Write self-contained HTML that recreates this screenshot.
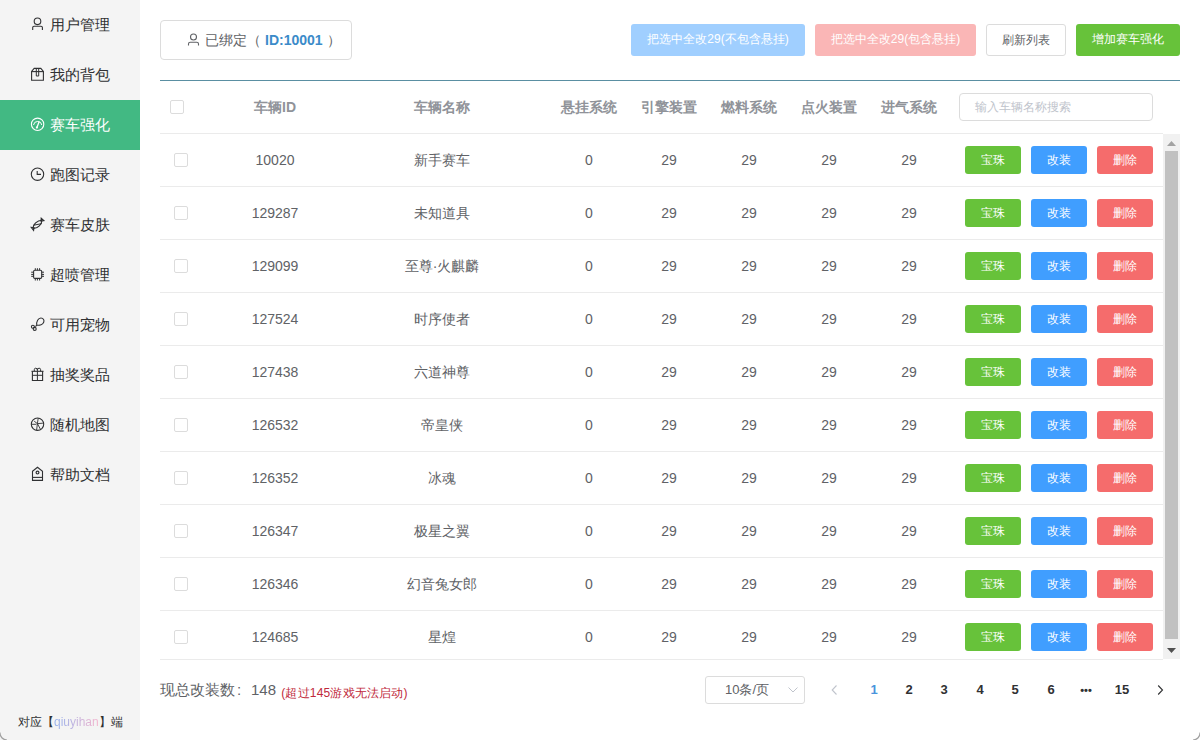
<!DOCTYPE html>
<html><head><meta charset="utf-8">
<style>
*{box-sizing:border-box;margin:0;padding:0}
html,body{width:1200px;height:740px;overflow:hidden;background:#fff;font-family:"Liberation Sans",sans-serif;}
.abs{position:absolute}
#side{position:absolute;left:0;top:0;width:140px;height:740px;background:#f4f4f4}
.mi{position:absolute;left:0;width:140px;height:50px;color:#303133;font-size:15px}
.mi.act{background:#42b983;color:#fff}
.ic{position:absolute;left:26px}
.mi .tx{position:absolute;left:50px;top:0;line-height:50px;white-space:nowrap}
#foot{position:absolute;left:18px;top:712px;font-size:12px;color:#303133;white-space:nowrap;line-height:20px}
#foot .g{background:linear-gradient(90deg,#93b2ee,#f5b3cc);-webkit-background-clip:text;background-clip:text;color:transparent}
.btn{position:absolute;top:24px;height:32px;border-radius:3px;font-size:12px;color:#fff;text-align:center;line-height:31px;white-space:nowrap}
#bind{position:absolute;left:160px;top:20px;width:192px;height:40px;border:1px solid #dcdcdc;border-radius:4px;font-size:14px;color:#606266}
#teal{position:absolute;left:160px;top:80px;width:1020px;height:1px;background:#5a8fa2}
.th{position:absolute;top:97px;font-size:14px;font-weight:bold;color:#909399;white-space:nowrap;line-height:20px;text-align:center}
.cb{position:absolute;width:14px;height:14px;border:1px solid #dcdcdc;border-radius:2px;background:#fff}
#body{position:absolute;left:160px;top:133px;width:1003px;height:527px;overflow:hidden;border-top:1px solid #ebebeb;border-bottom:1px solid #ebebeb}
.row{position:absolute;left:0;width:1003px;height:53px;border-bottom:1px solid #ebebeb}
.row .cb{top:19px}
.td{position:absolute;top:0;line-height:52px;font-size:14px;color:#606266;text-align:center;white-space:nowrap}
.sb{position:absolute;top:12px;width:56px;height:28px;border-radius:3px;font-size:12px;color:#fff;text-align:center;line-height:28px}
#scroll{position:absolute;left:1163px;top:134px;width:17px;height:525px;background:#f1f1f1}
#thumb{position:absolute;left:2px;top:17px;width:13px;height:488px;background:#c1c1c1}
.pg{position:absolute;top:680px;font-size:13px;font-weight:bold;color:#303133;line-height:20px;text-align:center}
</style></head><body>
<div id="side">
<div class="mi" style="top:0px"><svg class="ic" style="top:12px" width="24" height="24" viewBox="0 0 24 24" fill="none" stroke="#303133" stroke-width="1.1"><circle cx="11.5" cy="9.3" r="3.3"/><path d="M6.7 18V15.6Q6.7 14.3 8 14.3H15Q16.4 14.3 16.4 15.6V18"/></svg><span class="tx">用户管理</span></div>
<div class="mi" style="top:50px"><svg class="ic" style="top:12px" width="24" height="24" viewBox="0 0 24 24" fill="none" stroke="#303133" stroke-width="1.1"><path d="M5.6 18.3V9.4L8.2 6.4H14.8L17.4 9.4V18.3Z"/><path d="M5.6 9.6H17.4"/><path d="M10.3 6.4V14H12.7V6.4" stroke-width="1"/></svg><span class="tx">我的背包</span></div>
<div class="mi act" style="top:100px"><svg class="ic" style="top:12px" width="24" height="24" viewBox="0 0 24 24" fill="none" stroke="#fff" stroke-width="1.1"><circle cx="11.6" cy="12.3" r="6.2"/><path d="M7.5 13A4.2 4.2 0 0 1 15.8 13" stroke-width="1"/><path d="M13.2 9.6L11 15.2" stroke-width="1.3"/><circle cx="10.9" cy="15.6" r="1.1" fill="#fff" stroke="none"/></svg><span class="tx">赛车强化</span></div>
<div class="mi" style="top:150px"><svg class="ic" style="top:12px" width="24" height="24" viewBox="0 0 24 24" fill="none" stroke="#303133" stroke-width="1.1"><circle cx="11.5" cy="12.2" r="6.2"/><path d="M11.2 9V12.4H15"/></svg><span class="tx">跑图记录</span></div>
<div class="mi" style="top:200px"><svg class="ic" style="top:12px" width="24" height="24" viewBox="0 0 24 24" fill="none" stroke="#303133" stroke-width="1.1"><path d="M7.4 16.4C6.6 12.6 11.4 8.2 15.6 8.2C16.4 12 11.6 16.6 7.4 16.4Z"/><path d="M7.2 13.3L15.9 11.6" stroke-width="1"/><path d="M15 9L15.2 6.1L17.9 8.6Z"/><path d="M8 15.5L5.2 15.4L7.6 18.4Z"/></svg><span class="tx">赛车皮肤</span></div>
<div class="mi" style="top:250px"><svg class="ic" style="top:12px" width="24" height="24" viewBox="0 0 24 24" fill="none" stroke="#303133" stroke-width="1.1"><rect x="7.6" y="8.3" width="8.1" height="8.1" rx="1.2"/><path d="M9.3 6.2V8.3M11.4 6.2V8.3M13.6 6.2V8.3M9.3 16.4V18.5M11.4 16.4V18.5M13.6 16.4V18.5M5.2 10.2H7.6M5.2 12.4H7.6M5.2 14.3H7.6M15.7 10.2H18M15.7 12.4H18M15.7 14.3H18" stroke-width="1"/></svg><span class="tx">超喷管理</span></div>
<div class="mi" style="top:300px"><svg class="ic" style="top:12px" width="24" height="24" viewBox="0 0 24 24" fill="none" stroke="#303133" stroke-width="1.1"><path d="M10.8 13.2C10.2 9.6 12.2 6 14.9 6C17.6 6 18.4 8.4 17.7 10.2C16.9 12.3 13.8 13.6 10.8 13.2Z"/><path d="M10.8 13.2L9.4 14.6"/><circle cx="6.9" cy="14.8" r="1.5"/><circle cx="8.7" cy="16.9" r="1.5"/></svg><span class="tx">可用宠物</span></div>
<div class="mi" style="top:350px"><svg class="ic" style="top:12px" width="24" height="24" viewBox="0 0 24 24" fill="none" stroke="#303133" stroke-width="1.1"><path d="M5.5 9.3H17.5"/><path d="M6.4 9.3V18.5H16.6V9.3"/><path d="M11.4 6.5V18.5M6.4 13.3H16.6" stroke-width="1"/><path d="M8.3 9.3V7.6Q8.3 6.2 9.7 6.2Q11.4 6.2 11.4 8M11.4 8Q11.4 6.2 13.1 6.2Q14.6 6.2 14.6 7.6V9.3" stroke-width="1"/></svg><span class="tx">抽奖奖品</span></div>
<div class="mi" style="top:400px"><svg class="ic" style="top:12px" width="24" height="24" viewBox="0 0 24 24" fill="none" stroke="#303133" stroke-width="1.1"><circle cx="11.5" cy="12.2" r="6.2"/><path d="M5.4 12.3H10.3M8.2 9.2L11.4 11.6L12.2 6.2M11.4 11.6L16.9 11.2M11.4 11.6L14.5 17.4M11.4 11.6L10.6 18.3" stroke-width="0.9"/></svg><span class="tx">随机地图</span></div>
<div class="mi" style="top:450px"><svg class="ic" style="top:12px" width="24" height="24" viewBox="0 0 24 24" fill="none" stroke="#303133" stroke-width="1.1"><path d="M6.5 9.2L11.5 5.3L16.5 9.2V18.4H6.5Z"/><circle cx="11.5" cy="10.6" r="1.4" stroke-width="1.2"/><path d="M6.5 15.4H16.5"/></svg><span class="tx">帮助文档</span></div>
  <div id="foot"><span class="abs" style="left:0">对应【</span><span class="abs g" style="left:36px">qiuyihan</span><span class="abs" style="left:80.7px">】端</span></div>
</div>

<div id="bind">
  <svg class="abs" style="left:26px;top:12px" width="13" height="13" viewBox="0 0 13 13"><circle cx="6.5" cy="4" r="3" fill="none" stroke="#606266" stroke-width="1.1"/><path d="M1.5 12.5V11Q1.5 9.3 3.2 9.3H9.8Q11.5 9.3 11.5 11V12.5" fill="none" stroke="#606266" stroke-width="1.1"/></svg>
  <span class="abs" style="left:44px;top:0;line-height:38px;white-space:nowrap">已绑定（</span><b class="abs" style="left:104px;top:0;line-height:38px;white-space:nowrap;color:#3b8bc9">ID:10001</b><span class="abs" style="left:165.5px;top:0;line-height:38px;white-space:nowrap">）</span>
</div>

<div class="btn" style="left:631px;width:174px;background:#a0cfff">把选中全改29(不包含悬挂)</div>
<div class="btn" style="left:815px;width:161px;background:#fab6b6">把选中全改29(包含悬挂)</div>
<div class="btn" style="left:986px;width:80px;background:#fff;border:1px solid #dcdcdc;color:#606266;line-height:30px">刷新列表</div>
<div class="btn" style="left:1076px;width:104px;background:#67c23a">增加赛车强化</div>

<div id="teal"></div>

<div class="cb" style="left:170px;top:100px"></div>
<div class="th" style="left:215px;width:120px">车辆ID</div>
<div class="th" style="left:335px;width:214px">车辆名称</div>
<div class="th" style="left:549px;width:80px">悬挂系统</div>
<div class="th" style="left:629px;width:80px">引擎装置</div>
<div class="th" style="left:709px;width:80px">燃料系统</div>
<div class="th" style="left:789px;width:80px">点火装置</div>
<div class="th" style="left:869px;width:80px">进气系统</div>
<div class="abs" style="left:959px;top:93px;width:194px;height:28px;border:1px solid #dcdcdc;border-radius:4px;font-size:12px;color:#c0c4cc;line-height:26px;padding-left:15px;white-space:nowrap">输入车辆名称搜索</div>

<div id="body">
<div class="row" style="top:0px"><div class="cb" style="left:14px"></div><div class="td" style="left:55px;width:120px">10020</div><div class="td" style="left:175px;width:214px">新手赛车</div><div class="td" style="left:389px;width:80px">0</div><div class="td" style="left:469px;width:80px">29</div><div class="td" style="left:549px;width:80px">29</div><div class="td" style="left:629px;width:80px">29</div><div class="td" style="left:709px;width:80px">29</div><div class="sb" style="left:805px;background:#67c23a">宝珠</div><div class="sb" style="left:871px;background:#409eff">改装</div><div class="sb" style="left:937px;background:#f56c6c">删除</div></div>
<div class="row" style="top:53px"><div class="cb" style="left:14px"></div><div class="td" style="left:55px;width:120px">129287</div><div class="td" style="left:175px;width:214px">未知道具</div><div class="td" style="left:389px;width:80px">0</div><div class="td" style="left:469px;width:80px">29</div><div class="td" style="left:549px;width:80px">29</div><div class="td" style="left:629px;width:80px">29</div><div class="td" style="left:709px;width:80px">29</div><div class="sb" style="left:805px;background:#67c23a">宝珠</div><div class="sb" style="left:871px;background:#409eff">改装</div><div class="sb" style="left:937px;background:#f56c6c">删除</div></div>
<div class="row" style="top:106px"><div class="cb" style="left:14px"></div><div class="td" style="left:55px;width:120px">129099</div><div class="td" style="left:175px;width:214px">至尊·火麒麟</div><div class="td" style="left:389px;width:80px">0</div><div class="td" style="left:469px;width:80px">29</div><div class="td" style="left:549px;width:80px">29</div><div class="td" style="left:629px;width:80px">29</div><div class="td" style="left:709px;width:80px">29</div><div class="sb" style="left:805px;background:#67c23a">宝珠</div><div class="sb" style="left:871px;background:#409eff">改装</div><div class="sb" style="left:937px;background:#f56c6c">删除</div></div>
<div class="row" style="top:159px"><div class="cb" style="left:14px"></div><div class="td" style="left:55px;width:120px">127524</div><div class="td" style="left:175px;width:214px">时序使者</div><div class="td" style="left:389px;width:80px">0</div><div class="td" style="left:469px;width:80px">29</div><div class="td" style="left:549px;width:80px">29</div><div class="td" style="left:629px;width:80px">29</div><div class="td" style="left:709px;width:80px">29</div><div class="sb" style="left:805px;background:#67c23a">宝珠</div><div class="sb" style="left:871px;background:#409eff">改装</div><div class="sb" style="left:937px;background:#f56c6c">删除</div></div>
<div class="row" style="top:212px"><div class="cb" style="left:14px"></div><div class="td" style="left:55px;width:120px">127438</div><div class="td" style="left:175px;width:214px">六道神尊</div><div class="td" style="left:389px;width:80px">0</div><div class="td" style="left:469px;width:80px">29</div><div class="td" style="left:549px;width:80px">29</div><div class="td" style="left:629px;width:80px">29</div><div class="td" style="left:709px;width:80px">29</div><div class="sb" style="left:805px;background:#67c23a">宝珠</div><div class="sb" style="left:871px;background:#409eff">改装</div><div class="sb" style="left:937px;background:#f56c6c">删除</div></div>
<div class="row" style="top:265px"><div class="cb" style="left:14px"></div><div class="td" style="left:55px;width:120px">126532</div><div class="td" style="left:175px;width:214px">帝皇侠</div><div class="td" style="left:389px;width:80px">0</div><div class="td" style="left:469px;width:80px">29</div><div class="td" style="left:549px;width:80px">29</div><div class="td" style="left:629px;width:80px">29</div><div class="td" style="left:709px;width:80px">29</div><div class="sb" style="left:805px;background:#67c23a">宝珠</div><div class="sb" style="left:871px;background:#409eff">改装</div><div class="sb" style="left:937px;background:#f56c6c">删除</div></div>
<div class="row" style="top:318px"><div class="cb" style="left:14px"></div><div class="td" style="left:55px;width:120px">126352</div><div class="td" style="left:175px;width:214px">冰魂</div><div class="td" style="left:389px;width:80px">0</div><div class="td" style="left:469px;width:80px">29</div><div class="td" style="left:549px;width:80px">29</div><div class="td" style="left:629px;width:80px">29</div><div class="td" style="left:709px;width:80px">29</div><div class="sb" style="left:805px;background:#67c23a">宝珠</div><div class="sb" style="left:871px;background:#409eff">改装</div><div class="sb" style="left:937px;background:#f56c6c">删除</div></div>
<div class="row" style="top:371px"><div class="cb" style="left:14px"></div><div class="td" style="left:55px;width:120px">126347</div><div class="td" style="left:175px;width:214px">极星之翼</div><div class="td" style="left:389px;width:80px">0</div><div class="td" style="left:469px;width:80px">29</div><div class="td" style="left:549px;width:80px">29</div><div class="td" style="left:629px;width:80px">29</div><div class="td" style="left:709px;width:80px">29</div><div class="sb" style="left:805px;background:#67c23a">宝珠</div><div class="sb" style="left:871px;background:#409eff">改装</div><div class="sb" style="left:937px;background:#f56c6c">删除</div></div>
<div class="row" style="top:424px"><div class="cb" style="left:14px"></div><div class="td" style="left:55px;width:120px">126346</div><div class="td" style="left:175px;width:214px">幻音兔女郎</div><div class="td" style="left:389px;width:80px">0</div><div class="td" style="left:469px;width:80px">29</div><div class="td" style="left:549px;width:80px">29</div><div class="td" style="left:629px;width:80px">29</div><div class="td" style="left:709px;width:80px">29</div><div class="sb" style="left:805px;background:#67c23a">宝珠</div><div class="sb" style="left:871px;background:#409eff">改装</div><div class="sb" style="left:937px;background:#f56c6c">删除</div></div>
<div class="row" style="top:477px"><div class="cb" style="left:14px"></div><div class="td" style="left:55px;width:120px">124685</div><div class="td" style="left:175px;width:214px">星煌</div><div class="td" style="left:389px;width:80px">0</div><div class="td" style="left:469px;width:80px">29</div><div class="td" style="left:549px;width:80px">29</div><div class="td" style="left:629px;width:80px">29</div><div class="td" style="left:709px;width:80px">29</div><div class="sb" style="left:805px;background:#67c23a">宝珠</div><div class="sb" style="left:871px;background:#409eff">改装</div><div class="sb" style="left:937px;background:#f56c6c">删除</div></div>
</div>

<div id="scroll"><div id="thumb"></div>
  <svg class="abs" style="left:4px;top:7px" width="9" height="5"><path d="M0 5L4.5 0 9 5z" fill="#a3a3a3"/></svg>
  <svg class="abs" style="left:4px;top:514px" width="9" height="5"><path d="M0 0L4.5 5 9 0z" fill="#505050"/></svg>
</div>

<div class="abs" style="left:160px;top:680px;font-size:15px;color:#606266;line-height:20px;white-space:nowrap">现总改装数</div>
<div class="abs" style="left:237px;top:680px;font-size:15px;color:#606266;line-height:20px">:</div>
<div class="abs" style="left:251px;top:680px;font-size:15px;color:#606266;line-height:20px">148</div>
<div class="abs" style="left:281.2px;top:686px;color:#c0283a;font-size:12px;letter-spacing:0.2px;line-height:14px;white-space:nowrap">(超过145游戏无法启动)</div>

<div class="abs" style="left:705px;top:676px;width:100px;height:28px;border:1px solid #dcdcdc;border-radius:3px;font-size:13px;color:#606266;line-height:26px;padding-left:19px;white-space:nowrap">10条/页
  <svg class="abs" style="left:82px;top:10px" width="10" height="6"><path d="M0.5 0.5L5 5 9.5 0.5" fill="none" stroke="#c0c4cc" stroke-width="1"/></svg>
</div>
<svg class="abs" style="left:831px;top:685px" width="7" height="10"><path d="M5.5 0.5L1.2 5 5.5 9.5" fill="none" stroke="#c0c4cc" stroke-width="1.1"/></svg>
<div class="pg" style="left:860px;width:28px;color:#4a94dc">1</div>
<div class="pg" style="left:895px;width:28px">2</div>
<div class="pg" style="left:930px;width:28px">3</div>
<div class="pg" style="left:966px;width:28px">4</div>
<div class="pg" style="left:1001px;width:28px">5</div>
<div class="pg" style="left:1037px;width:28px">6</div>
<div class="pg" style="left:1072px;width:28px;font-size:11px">•••</div>
<div class="pg" style="left:1108px;width:28px">15</div>
<svg class="abs" style="left:1157px;top:685px" width="7" height="10"><path d="M1.2 0.5L5.5 5 1.2 9.5" fill="none" stroke="#303133" stroke-width="1.1"/></svg>
<svg class="abs" style="left:0;top:732px" width="8" height="8"><path d="M0 0.5A7 7 0 0 0 7 8" fill="none" stroke="#a0a0a0" stroke-width="1.2"/></svg>
<svg class="abs" style="left:1192px;top:732px" width="8" height="8"><path d="M8 0.5A7 7 0 0 1 1 8" fill="none" stroke="#a0a0a0" stroke-width="1.2"/></svg>
</body></html>
